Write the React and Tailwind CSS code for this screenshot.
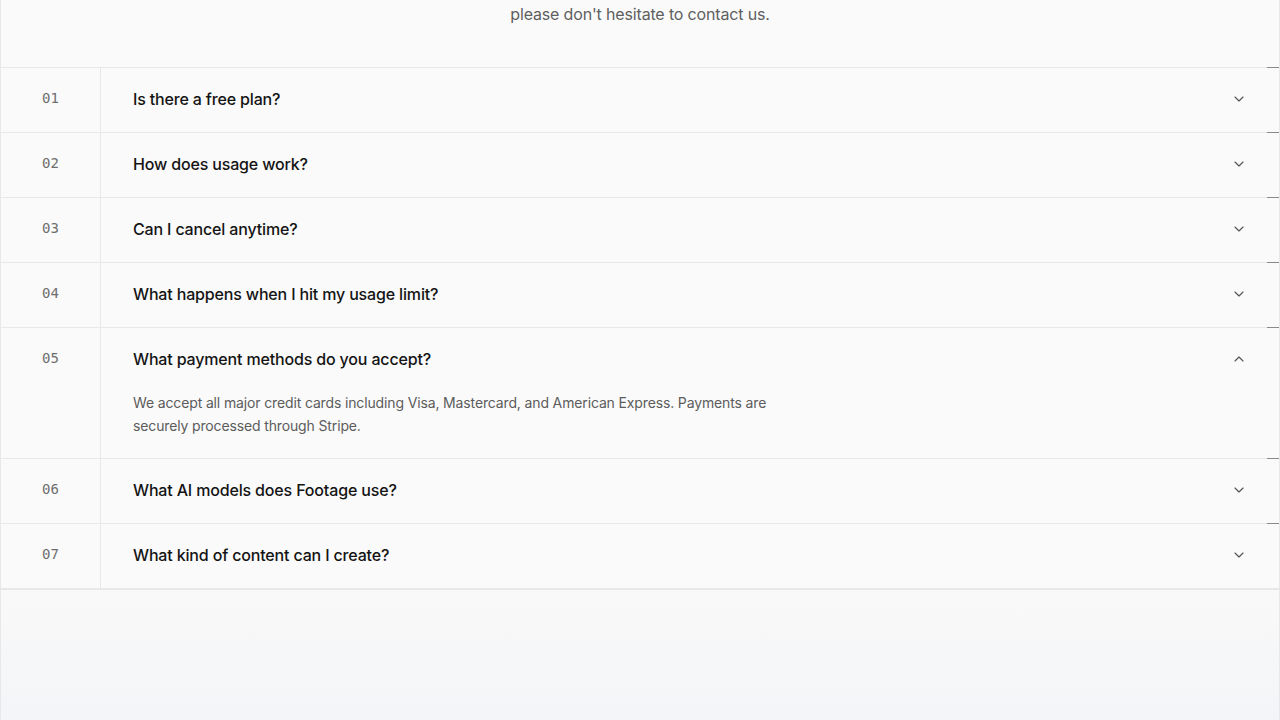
import React, { useState } from 'react';
import { ChevronDown, ChevronUp } from 'lucide-react';

const faqs = [
  { q: 'Is there a free plan?', a: 'Yes. You can start for free with a limited number of generations every month, no credit card required.' },
  { q: 'How does usage work?', a: 'Every generation uses credits from your monthly allowance. Credits reset at the start of each billing cycle.' },
  { q: 'Can I cancel anytime?', a: 'Yes, you can cancel your subscription at any time from your account settings.' },
  { q: 'What happens when I hit my usage limit?', a: 'You can upgrade your plan or wait until your credits reset at the start of the next cycle.' },
  { q: 'What payment methods do you accept?', a: 'We accept all major credit cards including Visa, Mastercard, and American Express. Payments are securely processed through Stripe.' },
  { q: 'What AI models does Footage use?', a: 'Footage uses a mix of leading video and image models, picked for each task.' },
  { q: 'What kind of content can I create?', a: 'Ads, explainers, social clips, product videos and more.' },
];

const FaqRow = ({ index, item, open, onToggle }) => {
  const Icon = open ? ChevronUp : ChevronDown;
  return (
    <div className="relative flex border-t border-[#e8e8e8]">
      {/* little mark on the right edge */}
      <span className="absolute right-0 -top-px h-px w-[12px] bg-[#8a8a8a]" />
      <div className="w-[100px] shrink-0 border-r border-[#e8e8e8]">
        <div className="flex h-[64px] items-center justify-center pb-[3px] font-['DejaVu_Sans_Mono',monospace] text-[14px] text-[#6e6e6e]">
          {String(index + 1).padStart(2, '0')}
        </div>
      </div>
      <div className="flex-1">
        <button
          onClick={onToggle}
          className="flex h-[64px] w-full items-center justify-between pb-[2px] pl-8 pr-8 text-left"
        >
          <span className="text-[16px] font-medium tracking-[-0.01em] text-[#141414]">{item.q}</span>
          <Icon size={16} strokeWidth={1.75} className="text-[#555]" />
        </button>
        {open && (
          <p className="-mt-px max-w-[680px] pb-[21px] pl-8 text-[14px] leading-[23px] tracking-[-0.01em] text-[#5c5c5c]">
            {item.a}
          </p>
        )}
      </div>
    </div>
  );
};

export default function App() {
  const [open, setOpen] = useState(4);

  return (
    <div className="min-h-screen bg-[#fafafa] font-['Inter',sans-serif]">
      <div className="border-x border-[#e8e8e8]">
        {/* Intro */}
        <div className="h-[67px] pt-[2px] text-center">
          <p className="text-[16px] leading-6 tracking-[-0.01em] text-[#5f5f5f]">please don't hesitate to contact us.</p>
        </div>

        {/* FAQ list */}
        <div className="border-b-2 border-[#e8e8e8]">
          {faqs.map((item, i) => (
            <FaqRow
              key={item.q}
              index={i}
              item={item}
              open={open === i}
              onToggle={() => setOpen(open === i ? -1 : i)}
            />
          ))}
        </div>

        {/* Footer glow */}
        <div className="h-[200px] bg-gradient-to-b from-[#f9f9f9] via-[#f5f6f8] to-[#ecf1f8]" />
      </div>
    </div>
  );
}
